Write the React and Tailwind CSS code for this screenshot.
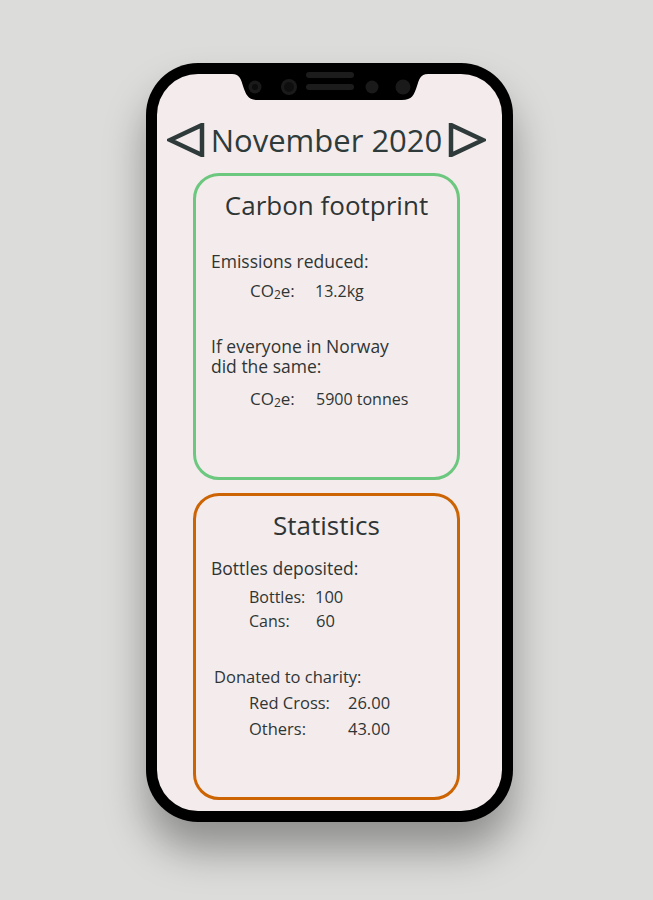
const font = { fontFamily: '"Open Sans", "Noto Sans", sans-serif' }

function Tri({ dir }) {
  const pts = dir === 'left' ? '35,2 3,17 35,32' : '3,2 35,17 3,32'
  return (
    <svg width="38" height="34" viewBox="0 0 38 34" className="shrink-0">
      <polygon points={pts} fill="none" stroke="#2f3a3a" strokeWidth="4.5" strokeLinejoin="miter" />
    </svg>
  )
}

function Co2() {
  return (
    <>
      CO<sub className="text-[12px] relative top-[2px]">2</sub>e:
    </>
  )
}

export default function App() {
  return (
    <div className="min-h-[900px] bg-[#dcdcda] pt-[63px] pl-[146px]" style={font}>
      <div className="relative w-[367px] h-[759px] rounded-[52px] bg-black p-[11px] shadow-[0_28px_40px_rgba(0,0,0,0.35)]">
        <div className="h-full rounded-[41px] bg-[#f4ecec] text-[#2f3535] overflow-hidden">
          {/* header */}
          <div className="flex items-center h-[40px] mt-[46px] pl-[10px] text-[#2f3a3a]">
            <Tri dir="left" />
            <span className="w-[243px] text-center text-[31px] leading-[40px] font-medium whitespace-nowrap">November 2020</span>
            <Tri dir="right" />
          </div>

          {/* carbon */}
          <div className="ml-[36px] mt-[13px] w-[267px] h-[307px] rounded-[26px] border-[3px] border-[#6cc77f] pt-[14px] pl-[15px]">
            <div className="text-center text-[26px] leading-[30px] pr-[15px]">Carbon footprint</div>
            <div className="mt-[30px] text-[17.5px] leading-[22px]">Emissions reduced:</div>
            <div className="flex mt-[8px] pl-[39px] leading-[22px]">
              <span className="w-[65px] font-medium text-[17px]"><Co2 /></span>
              <span className="text-[16px]">13.2kg</span>
            </div>
            <div className="mt-[34px] text-[17.5px] leading-[20px]">
              <div>If everyone in Norway</div>
              <div>did the same:</div>
            </div>
            <div className="flex mt-[12px] pl-[39px] leading-[22px]">
              <span className="w-[66px] font-medium text-[17px]"><Co2 /></span>
              <span className="text-[16px]">5900 tonnes</span>
            </div>
          </div>

          {/* statistics */}
          <div className="ml-[36px] mt-[13px] w-[267px] h-[307px] rounded-[26px] border-[3px] border-[#cc6404] pt-[14px] pl-[15px]">
            <div className="text-center text-[26px] leading-[30px] pr-[15px]">Statistics</div>
            <div className="mt-[17px] text-[17.5px] leading-[22px]">Bottles deposited:</div>
            <div className="mt-[6px] pl-[38px] text-[16px] leading-[24px]">
              <div className="flex"><span className="w-[66px]">Bottles:</span><span className="text-[16.5px]">100</span></div>
              <div className="flex"><span className="w-[67px]">Cans:</span><span className="text-[16.5px]">60</span></div>
            </div>
            <div className="mt-[33px] pl-[3px] text-[16.5px] leading-[22px]">Donated to charity:</div>
            <div className="mt-[2px] pl-[38px] text-[16.5px] leading-[26px]">
              <div className="flex"><span className="w-[99px]">Red Cross:</span><span>26.00</span></div>
              <div className="flex"><span className="w-[99px]">Others:</span><span>43.00</span></div>
            </div>
          </div>
        </div>

        {/* notch */}
        <svg width="196" height="37" viewBox="0 0 196 37" className="absolute left-[86px] top-0">
          <path d="M0 0 H196 V11 C188 11 187 17 185 23 C182 32 180 37 170 37 H26 C16 37 14 32 11 23 C9 17 8 11 0 11 Z" fill="#000" />
          <circle cx="23" cy="24" r="6.5" fill="#1a1a1a" />
          <circle cx="23" cy="24" r="3" fill="#0c0c0c" />
          <circle cx="57" cy="24" r="8" fill="#1a1a1a" />
          <circle cx="57" cy="24" r="5" fill="#0e0e0e" />
          <rect x="74" y="9" width="48" height="6" rx="3" fill="#1c1c1c" />
          <rect x="74" y="21" width="48" height="6" rx="3" fill="#1c1c1c" />
          <circle cx="140" cy="24" r="6.5" fill="#1a1a1a" />
          <circle cx="171" cy="24" r="7.5" fill="#1a1a1a" />
        </svg>
      </div>
    </div>
  )
}
